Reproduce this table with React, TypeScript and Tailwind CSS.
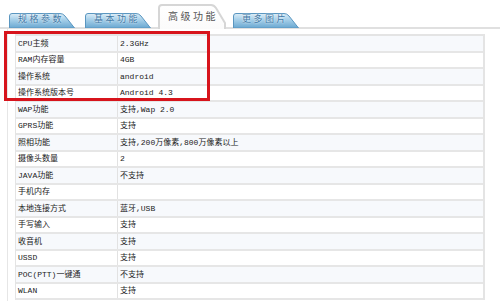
import type { ReactNode } from 'react';

const rows: [string, string][] = [
  ['CPU主频', '2.3GHz'],
  ['RAM内存容量', '4GB'],
  ['操作系统', 'android'],
  ['操作系统版本号', 'Android 4.3'],
  ['WAP功能', '支持,Wap 2.0'],
  ['GPRS功能', '支持'],
  ['照相功能', '支持,200万像素,800万像素以上'],
  ['摄像头数量', '2'],
  ['JAVA功能', '不支持'],
  ['手机内存', ''],
  ['本地连接方式', '蓝牙,USB'],
  ['手写输入', '支持'],
  ['收音机', '支持'],
  ['USSD', '支持'],
  ['POC(PTT)一键通', '不支持'],
  ['WLAN', '支持'],
];

function Tab({ id, label, className }: { id: string; label: string; className: string }) {
  return (
    <div className={`relative h-[15px] w-[66px] ${className}`}>
      <svg className="absolute inset-0" width="66" height="15" viewBox="0 0 66 15">
        <defs>
          <linearGradient id={id} x1="0" y1="0" x2="0" y2="1">
            <stop offset="0" stopColor="#dcedf7" />
            <stop offset="0.4" stopColor="#a9d1ea" />
            <stop offset="1" stopColor="#6aa8d1" />
          </linearGradient>
        </defs>
        <path
          d="M0.5 15 L0.5 3 Q0.5 0.5 3 0.5 L51 0.5 Q54 0.5 56 3 L65.5 15 Z"
          fill={`url(#${id})`}
          stroke="#5a96c0"
        />
      </svg>
      <span className="relative flex h-full items-center pl-[9px] pt-[1px] text-[9px] tracking-[2.5px] text-[#3f78a5] [text-shadow:0_0_2px_#fff]">
        {label}
      </span>
    </div>
  );
}

function Cell({ children, className }: { children: ReactNode; className: string }) {
  return <div className={`flex items-center ${className}`}>{children}</div>;
}

export default function App() {
  return (
    <div className="relative h-[301px] w-[500px] overflow-hidden bg-white font-['Liberation_Mono','Noto_Sans_CJK_SC',monospace] text-[8px] text-[#222]">
      <div className="flex h-[29px] items-end border-b-2 border-[#e0e0e0] pl-[9px]">
        <Tab id="t1" label="规格参数" className="-mb-[1px]" />
        <Tab id="t2" label="基本功能" className="ml-[10px] -mb-[1px]" />
        <div className="relative z-10 -mb-[2px] ml-[7px] h-[25px] w-[68px]">
          <svg className="absolute inset-0" width="68" height="25" viewBox="0 0 68 25">
            <defs>
              <linearGradient id="act" x1="0" y1="0" x2="0" y2="1">
                <stop offset="0" stopColor="#ffffff" />
                <stop offset="1" stopColor="#fbfbfb" />
              </linearGradient>
            </defs>
            <path d="M1 25 L1 4 Q1 1 4 1 L53 1 Q56 1 58 4 L67 19 L67 25" fill="url(#act)" stroke="#d6d6d6" strokeWidth="2" />
          </svg>
          <span className="relative flex h-[22px] items-center pl-[10px] font-['Noto_Sans_CJK_SC',sans-serif] text-[10px] tracking-[2.5px] text-[#555]">
            高级功能
          </span>
        </div>
        <Tab id="t4" label="更多图片" className="ml-[7px] -mb-[1px]" />
      </div>

      <div className="ml-[7px] h-full border-l border-[#e6e6e6] pl-[7px] pt-[5px]">
        <div className="w-[470px] border-t-2 border-r-2 border-l border-[#e4e4e4]">
          {rows.map(([k, v], i) => (
            <div
              key={k}
              className={`flex border-b-2 border-[#e6e6e6] ${i % 2 === 0 ? 'h-[17px] bg-[#f7f9fc]' : 'h-[16px] bg-white'}`}
            >
              <Cell className="w-[102px] border-r border-[#e2e2e2] pl-[2px]">{k}</Cell>
              <Cell className="flex-1 pl-[2px]">{v}</Cell>
            </div>
          ))}
        </div>
      </div>

      <div className="absolute left-[4px] top-[31px] h-[70px] w-[206px] border-[3px] border-[#d7141c]" />
    </div>
  );
}
